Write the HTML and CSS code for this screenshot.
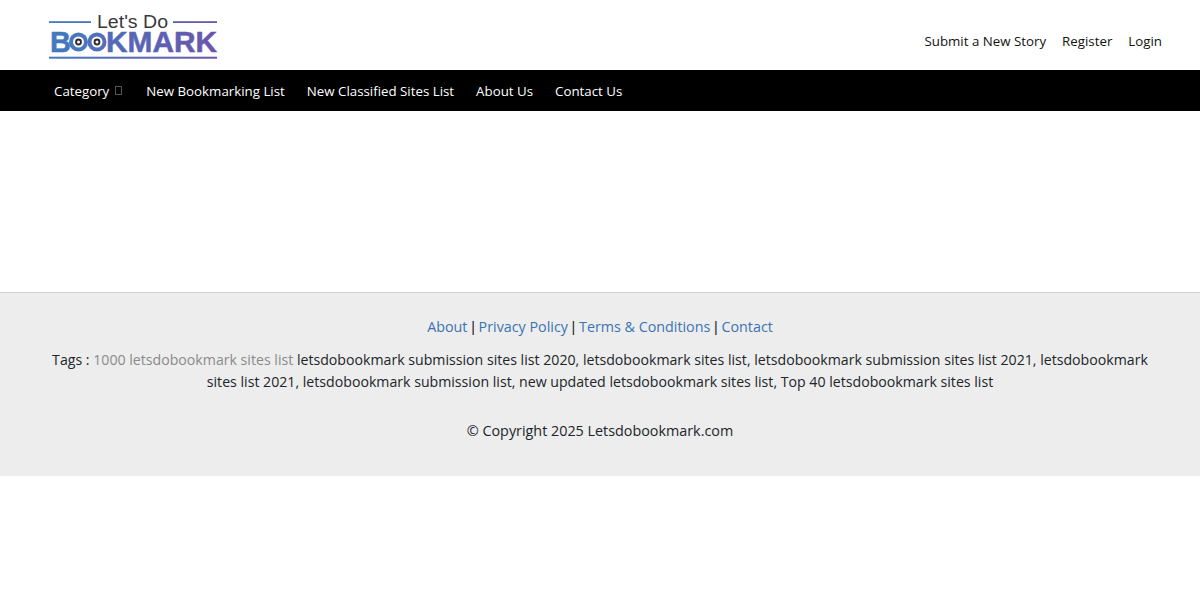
FILE: index.html
```html
<!DOCTYPE html>
<html lang="en">
<head>
<meta charset="utf-8">
<title>Let's Do Bookmark</title>
<link rel="stylesheet" href="styles.css">
</head>
<body>
<header class="top">
  <a class="logo" href="#" aria-label="Let's Do Bookmark">
    <svg width="170" height="50" viewBox="0 0 170 50">
      <defs>
        <linearGradient id="g" gradientUnits="userSpaceOnUse" x1="0" y1="0" x2="170" y2="0">
          <stop offset="0" stop-color="#3f7cc0"/>
          <stop offset="0.45" stop-color="#5568b6"/>
          <stop offset="1" stop-color="#6a55ad"/>
        </linearGradient>
      </defs>
      <rect x="1" y="11.200" width="42" height="1.800" fill="url(#g)"/>
      <rect x="125" y="11.200" width="44" height="1.800" fill="url(#g)"/>
      <text x="49" y="17.500" class="logo-top" textLength="71" lengthAdjust="spacingAndGlyphs">Let's Do</text>
      <text x="2" y="42.300" class="logo-big">B</text>
      <circle cx="30.500" cy="32" r="9.500" fill="#4a78bd"/><circle cx="30.500" cy="32" r="5.500" fill="#fff"/><circle cx="30.500" cy="32" r="3.400" fill="#2a2a30"/><circle cx="30.500" cy="32" r="1.500" fill="#fff"/>
      <circle cx="49" cy="32" r="9.500" fill="#5270bb"/><circle cx="49" cy="32" r="5.500" fill="#fff"/><circle cx="49" cy="32" r="3.400" fill="#2a2a30"/><circle cx="49" cy="32" r="1.500" fill="#fff"/>
      <text x="58" y="42.300" class="logo-big" textLength="111" lengthAdjust="spacingAndGlyphs">KMARK</text>
      <rect x="1" y="46.700" width="168" height="2" fill="url(#g)"/>
    </svg>
  </a>
  <nav class="user-links">
    <a href="#">Submit a New Story</a>
    <a href="#">Register</a>
    <a href="#">Login</a>
  </nav>
</header>
<nav class="main-nav">
  <a class="cat" href="#">Category<span class="caret"></span></a>
  <a href="#">New Bookmarking List</a>
  <a href="#">New Classified Sites List</a>
  <a href="#">About Us</a>
  <a href="#">Contact Us</a>
</nav>
<main class="content"></main>
<footer class="footer">
  <p class="links"><a href="#">About</a> <span class="sep">|</span> <a href="#">Privacy Policy</a> <span class="sep">|</span> <a href="#">Terms &amp; Conditions</a> <span class="sep">|</span> <a href="#">Contact</a></p>
  <p class="tags">Tags : <span class="muted">1000 letsdobookmark sites list</span> letsdobookmark submission sites list 2020, letsdobookmark sites list, letsdobookmark submission sites list 2021, letsdobookmark sites list 2021, letsdobookmark submission list, new updated letsdobookmark sites list, Top 40 letsdobookmark sites list</p>
  <p class="copy">© Copyright 2025 Letsdobookmark.com</p>
</footer>
</body>
</html>
```
FILE: styles.css
```css
* { box-sizing: border-box; }
body { margin: 0; background: #fff; color: #212529; font-family: "Open Sans", "Noto Sans", sans-serif; font-size: 14.15px; line-height: 22px; }
a { text-decoration: none; color: inherit; }
p { margin: 0; }
.top { height: 70px; display: flex; justify-content: space-between; padding: 10px 38px 0 48px; }
.logo { display: block; height: 50px; }
.logo svg { display: block; overflow: visible; }
.logo-top { font-family: "Liberation Sans", sans-serif; font-size: 18px; fill: #38383c; }
.logo-big { font-family: "Liberation Sans", sans-serif; font-size: 29px; font-weight: 700; fill: url(#g); stroke: url(#g); stroke-width: 0.5px; }
.user-links { display: flex; gap: 16px; padding-top: 20px; font-size: 13.3px; color: #111; }
.main-nav { height: 41px; background: #000; color: #fff; display: flex; align-items: center; gap: 22px; padding-left: 54px; font-size: 13.3px; }
.cat { display: flex; align-items: center; margin-right: 2px; }
.caret { width: 7px; height: 9px; margin-left: 6px; border: 1px solid #555; }
.content { height: 181px; }
.footer { height: 184px; background: #ededed; border-top: 1px solid #d0d0d0; padding: 23px 48px 0; text-align: center; }
.links { font-size: 14.3px; }
.links a { color: #3a74b4; }
.sep { font-family: "Liberation Sans", sans-serif; }
.tags { margin-top: 11px; }
.muted { color: #8a8a8a; }
.copy { margin-top: 27px; font-size: 14.35px; }
```
